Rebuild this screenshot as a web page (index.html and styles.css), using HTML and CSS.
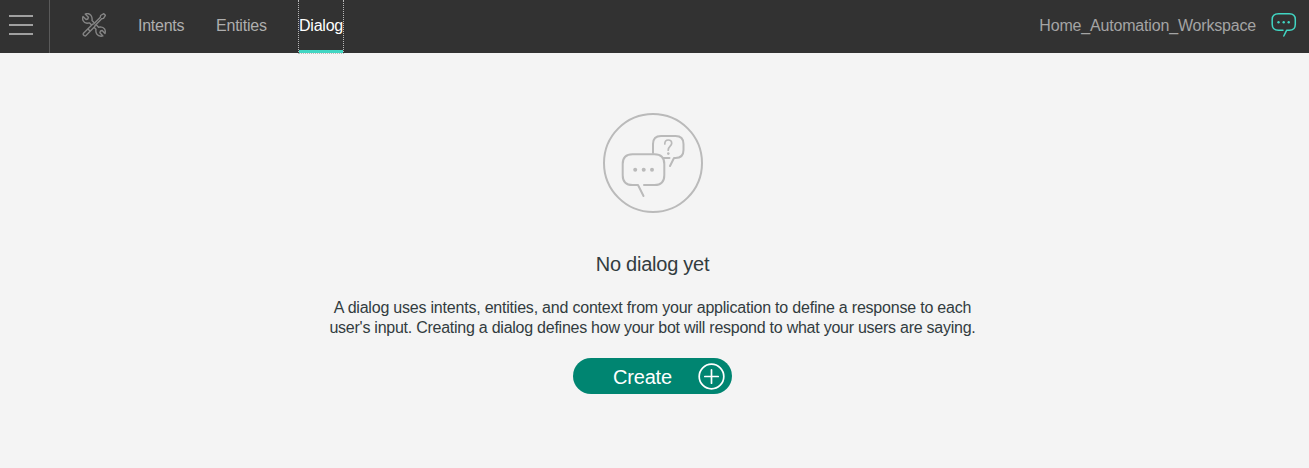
FILE: index.html
```html
<!DOCTYPE html>
<html lang="en">
<head>
<meta charset="utf-8">
<title>Dialog</title>
<link rel="stylesheet" href="styles.css">
</head>
<body>
<header class="topbar">
  <button class="menu" aria-label="Menu"><span></span><span></span><span></span></button>
  <svg class="tools" viewBox="0 0 24 24" aria-hidden="true">
    <path d="M3.2 1.1 6.4 4.2 5.8 6 4.1 6.5 1 3.4C0 6.300 1.100 9.800 5 10.200L7.600 9.900 14 16.300C13.300 20 15.300 23 19 23.300L20.900 22.900 17.900 19.800 18.500 18 20.200 17.500 23 20.500C24 17 22.200 14 18.500 13.900L16.600 14.200 10 7.600C10.700 3.500 8.200.300 4.800.500Z"/>
    <path class="fill" d="M21.800.700 18.600 2.500 18.300 4.300 11.700 10.900 10.600 11.200 1.700 20.100C.300 21.500 2.600 23.900 4 22.500L12.800 13.600 13.100 12.400 19.700 5.700 21.500 5.400 23.400 2.300Z"/>
    <path d="M6.500 16.500 7.700 17.700"/>
  </svg>
  <nav class="tabs">
    <a class="tab intents">Intents</a>
    <a class="tab entities">Entities</a>
    <a class="tab active">Dialog</a>
  </nav>
  <span class="workspace">Home_Automation_Workspace</span>
  <svg class="chat" viewBox="0 0 26 26" aria-hidden="true">
    <path d="M12 18.300H7.500Q1.200 18.300 1.200 12.300V7.500Q1.200 1.700 7.500 1.700H18.300Q24.300 1.700 24.300 7.500V12.300Q24.300 18.300 18.300 18.300H15.600L12.800 24"/>
    <circle cx="7.500" cy="10.200" r="1.200"/><circle cx="12.700" cy="10.200" r="1.200"/><circle cx="17.700" cy="10.200" r="1.200"/>
  </svg>
</header>
<main class="empty">
  <svg class="hero" viewBox="0 0 100 100" aria-hidden="true">
    <circle cx="50" cy="50" r="49"/>
    <path d="M50 40V31Q50 23 58 23H72.500Q80.500 23 80.500 31V37Q80.500 45 72.500 45H71L67 53M60 45H66.500"/>
    <path class="mark" d="M61.800 31Q61.800 27 65.200 27 68.700 27 68.700 30.300C68.700 33.200 65.200 33.200 65.200 37.200"/>
    <circle class="dot" cx="65.300" cy="40.600" r="1.300"/>
    <path d="M41 72H51.500Q61.300 72 61.300 62.200V51Q61.300 41.200 51.500 41.200H29.500Q19.700 41.200 19.700 51V62.200Q19.700 72 29.500 72H35L40.500 83"/>
    <circle class="dot" cx="32.200" cy="56.700" r="2"/><circle class="dot" cx="40.700" cy="56.700" r="2"/><circle class="dot" cx="49" cy="56.700" r="2"/>
  </svg>
  <h1 class="title">No dialog yet</h1>
  <p class="copy"><span class="line first">A dialog uses intents, entities, and context from your application to define a response to each</span><span class="line second">user's input. Creating a dialog defines how your bot will respond to what your users are saying.</span></p>
  <button class="create"><span>Create</span>
    <svg class="plus" viewBox="0 0 27 27" aria-hidden="true"><circle cx="13.500" cy="13.500" r="12.300"/><path d="M6.800 13.500H20.200M13.500 6.800V20.200"/></svg>
  </button>
</main>
</body>
</html>
```
FILE: styles.css
```css
* { box-sizing: border-box; }
body {
  margin: 0;
  height: 468px;
  overflow: hidden;
  background: #f4f4f4;
  font-family: "Liberation Sans", Arial, sans-serif;
  font-size: 16px;
  color: #323c3f;
}
button { border: 0; padding: 0; font: inherit; }
svg { display: block; flex: none; fill: none; stroke-linecap: round; stroke-linejoin: round; }
.topbar {
  display: flex;
  height: 53px;
  padding-right: 12px;
  background: #323232;
  color: #aeaeae;
}
.menu {
  display: flex;
  flex-direction: column;
  gap: 7px;
  width: 50px;
  padding: 15px 0 0 9px;
  background: none;
  border-right: 1px solid #5a5a5a;
}
.menu span { width: 24px; height: 2px; background: #a0a0a0; }
.tools { width: 24px; height: 24px; margin: 13px 0 0 32px; stroke: #858585; stroke-width: 1.4; }
.tools .fill { fill: #323232; }
.tabs { display: flex; margin-left: 32px; }
.tab { height: 53px; line-height: 51px; white-space: nowrap; }
.intents { width: 78px; letter-spacing: -0.25px; }
.entities { width: 82px; letter-spacing: -0.22px; }
.active {
  width: 46px;
  height: 54px;
  border: 1px dotted #b8b8b8;
  border-top: 0;
  box-shadow: inset 0 -3px #41d6c3;
  color: #fff;
  letter-spacing: -0.22px;
}
.workspace { margin-left: auto; line-height: 51px; letter-spacing: -0.18px; color: #a4a4a4; }
.chat { width: 26px; height: 26px; margin: 12px 0 0 15px; stroke: #41d6c3; stroke-width: 1.5; }
.chat circle { fill: #41d6c3; stroke: none; }
.empty { display: flex; flex-direction: column; align-items: center; padding: 60px 4px 0 0; }
.hero { width: 100px; height: 100px; stroke: #bababa; stroke-width: 2; }
.hero .mark { stroke-width: 1.7; }
.hero .dot { fill: #bababa; stroke: none; }
.title { margin: 39px 0 0; font-size: 20px; font-weight: 400; line-height: 24px; letter-spacing: -0.25px; }
.copy { margin: 22px 0 0; line-height: 20px; text-align: center; }
.line { display: block; white-space: nowrap; }
.first { letter-spacing: -0.21px; }
.second { letter-spacing: -0.25px; }
.create {
  display: flex;
  align-items: center;
  width: 159px;
  height: 36px;
  margin-top: 20px;
  padding-left: 40px;
  border-radius: 18px;
  background: #008571;
  color: #fff;
  font-size: 20px;
}
.create span { width: 85px; padding-top: 2px; text-align: left; letter-spacing: -0.2px; }
.plus { width: 27px; height: 27px; stroke: #fff; stroke-width: 1.7; }
```
